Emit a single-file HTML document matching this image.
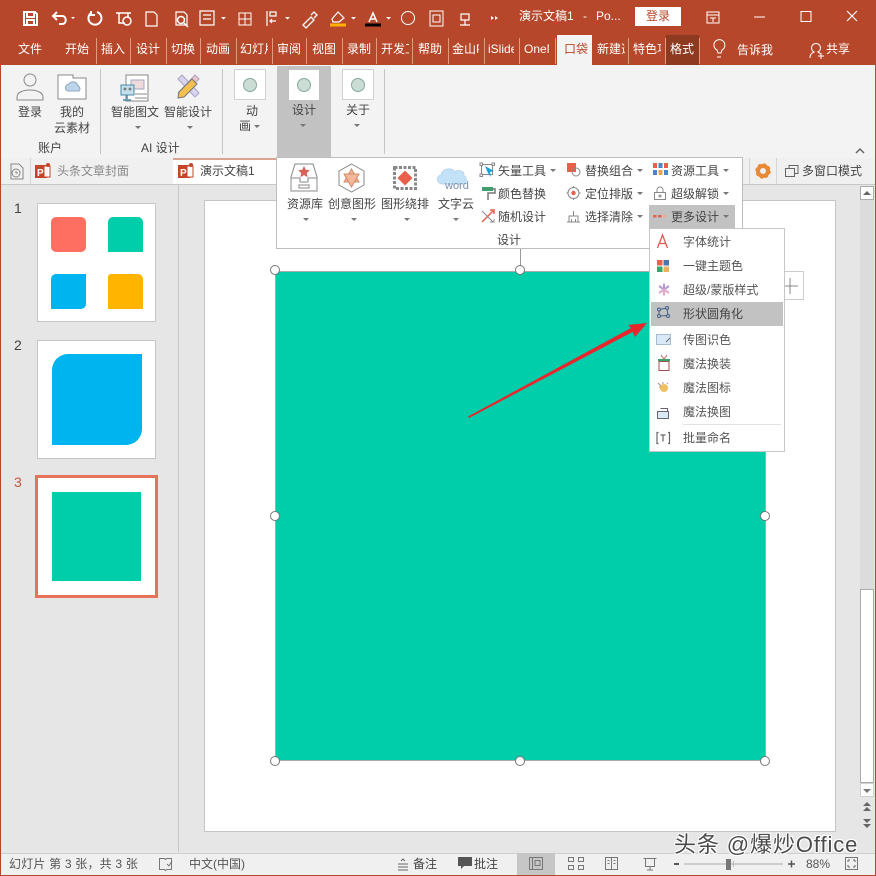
<!DOCTYPE html>
<html lang="zh"><head><meta charset="utf-8"><title>演示文稿1 - PowerPoint</title>
<style>
html,body{margin:0;padding:0}
body{width:876px;height:876px;position:relative;overflow:hidden;background:#e6e6e6;font-family:"Liberation Sans","Noto Sans CJK SC",sans-serif;font-size:12px;color:#444}
.b{position:absolute}
.t{position:absolute;white-space:nowrap;line-height:16px}
.w{color:#fff}
.c{overflow:hidden}
.d{position:absolute;width:0;height:0;border-left:3px solid transparent;border-right:3px solid transparent;border-top:3px solid #777}
.s{position:absolute;width:1px;height:26px;top:38px;background:#e59a7f}
.v{position:absolute;width:1px;background:#c6c6c6}
.h{position:absolute;width:8px;height:8px;border:1px solid #777;border-radius:50%;background:#fff}
.ic{position:absolute;width:30px;height:30px;background:#fff;border:1px solid #d2d2d2;box-sizing:border-box}
.ic i{position:absolute;left:7px;top:7px;width:14px;height:14px;border-radius:50%;background:#c9ddd5;border:1px solid #88a89c;box-sizing:border-box}
svg{position:absolute;overflow:visible}
</style></head><body>

<!-- title bar + tab row -->
<div class="b" style="left:0;top:0;width:876px;height:65px;background:#b7472a"></div>
<div class="b" style="left:0;top:0;width:1px;height:876px;background:#b7472a"></div>
<div class="b" style="right:0;top:0;width:1px;height:876px;background:#b7472a"></div>
<div class="b" style="left:0;bottom:0;width:876px;height:1px;background:#b7472a"></div>

<svg style="left:0;top:0" width="876" height="65" fill="none" stroke="#fff" stroke-width="1.500">
<path d="M24 12h11l2 2v11H24z M27 12v5h7v-5 M27 25v-5h7v5" stroke-width="2"/>
<path d="M54 16h8c5 0 5 8 0 8h-3 M57 12l-4 4 4 4" stroke-width="2"/><path d="M71 17l2 2 2-2z" fill="#fff" stroke="none"/>
<path d="M97 12a6.500 6.500 0 1 1-6 1 M91 11v4h4" stroke-width="2"/>
<path d="M116 13h15 M119 13v10h6 M128 13v4"/><circle cx="127" cy="21" r="4"/>
<path d="M146 12h8l3 3v11h-11z" stroke-width="1.200"/>
<path d="M176 12h8l3 3v10h-11z" stroke-width="1.200"/><circle cx="181" cy="20" r="3.500"/><path d="M184 23l4 4"/>
<path d="M200 11h14v14h-14z M203 15h8 M203 19h8" stroke-width="1.200"/><path d="M221 17l2.500 2.500 2.500-2.500z" fill="#fff" stroke="none"/>
<path d="M239 13h12v12h-12z M245 13v12 M239 19h12" stroke-width="1"/>
<path d="M267 11v15 M270 12h6v4h-6z M270 21h6 M272 19l-2 2 2 2" stroke-width="1.200"/><path d="M285 17l2.500 2.500 2.500-2.500z" fill="#fff" stroke="none"/>
<path d="M303 25l8-8 3 3-8 8z M311 15l3-3 3 3-3 3" stroke-width="1.300"/>
<path d="M332 19l6-7 6 6-5 4h-6z" stroke-width="1.200"/><path d="M330 25h16" stroke="#ffb000" stroke-width="3"/><path d="M351 17l2.500 2.500 2.500-2.500z" fill="#fff" stroke="none"/>
<path d="M369 22l4-9 4 9 M370.500 19h5" stroke-width="1.500"/><path d="M365 25h16" stroke="#000" stroke-width="3"/><path d="M386 17l2.500 2.500 2.500-2.500z" fill="#fff" stroke="none"/>
<circle cx="408" cy="18" r="6.500" stroke-width="1"/>
<path d="M430 11h13v15h-13z M433 15h7v7h-7z" stroke-width="1"/>
<path d="M461 14h8v6h-8z M465 20v5 M460 25h10" stroke-width="1.200"/>
<path d="M491 16v4l3-2z M495 16v4l3-2z" fill="#fff" stroke="none"/>
<path d="M707 12h12v11h-12z M707 15h12 M713 18v4 M710 18h6" stroke-width="1"/>
<path d="M754 17h11" stroke-width="1"/>
<path d="M801 11.500h10v10h-10z" stroke-width="1"/>
<path d="M847 11l10 10 M857 11l-10 10" stroke-width="1.200"/>
<path d="M714 44a5.500 5.500 0 1 1 8 6l-1 3h-3l-1-3a5.500 5.500 0 0 1-3-6z M717 57h4" stroke-width="1"/>
<path d="M810 58c0-4 2-5 4-6a4.500 4.500 0 1 1 4 0c1 .5 2 1 2.500 2 M818 56h6 M821 53v6" stroke-width="1"/>
</svg>

<div class="t w" style="left:519px;top:8px">演示文稿1</div>
<div class="t w" style="left:583px;top:8px">-</div>
<div class="t w" style="left:596px;top:8px">Po...</div>
<div class="b" style="left:635px;top:7px;width:46px;height:19px;background:#fff"></div>
<div class="t" style="left:646px;top:8px;color:#b7472a">登录</div>

<div class="t w" style="left:18px;top:41px">文件</div>
<div class="t w" style="left:65px;top:41px">开始</div>
<div class="t w" style="left:101px;top:41px">插入</div>
<div class="t w" style="left:136px;top:41px">设计</div>
<div class="t w" style="left:171px;top:41px">切换</div>
<div class="t w" style="left:206px;top:41px">动画</div>
<div class="t w c" style="left:240px;top:41px;width:28px">幻灯片放映</div>
<div class="t w" style="left:277px;top:41px">审阅</div>
<div class="t w" style="left:312px;top:41px">视图</div>
<div class="t w" style="left:347px;top:41px">录制</div>
<div class="t w c" style="left:381px;top:41px;width:28px">开发工具</div>
<div class="t w" style="left:418px;top:41px">帮助</div>
<div class="t w c" style="left:452px;top:41px;width:27px">金山PDF</div>
<div class="t w c" style="left:488px;top:41px;width:26px">iSlide</div>
<div class="t w c" style="left:524px;top:41px;width:25px">OneNote</div>
<div class="b" style="left:557px;top:35px;width:35px;height:30px;background:#f3f3f3"></div>
<div class="t" style="left:564px;top:41px;color:#b7472a">口袋</div>
<div class="t w c" style="left:597px;top:41px;width:28px">新建选项卡</div>
<div class="t w c" style="left:633px;top:41px;width:28px">特色功能</div>
<div class="b" style="left:666px;top:35px;width:33px;height:30px;background:#8e3a21"></div>
<div class="t w" style="left:670px;top:41px">格式</div>
<div class="t w" style="left:737px;top:42px">告诉我</div>
<div class="t w" style="left:826px;top:41px">共享</div>
<div class="s" style="left:96px"></div><div class="s" style="left:130px"></div><div class="s" style="left:166px"></div><div class="s" style="left:200px"></div><div class="s" style="left:236px"></div><div class="s" style="left:272px"></div><div class="s" style="left:306px"></div><div class="s" style="left:342px"></div><div class="s" style="left:376px"></div><div class="s" style="left:412px"></div><div class="s" style="left:448px"></div><div class="s" style="left:484px"></div><div class="s" style="left:519px"></div><div class="s" style="left:555px"></div><div class="s" style="left:628px"></div><div class="s" style="left:665px"></div><div class="s" style="left:699px"></div>

<!-- ribbon -->
<div class="b" style="left:1px;top:65px;width:874px;height:93px;background:#f3f3f3"></div>
<div class="v" style="left:100px;top:69px;height:85px"></div>
<div class="v" style="left:222px;top:69px;height:85px"></div>
<div class="v" style="left:384px;top:69px;height:85px"></div>
<svg style="left:0;top:60px" width="240" height="100" fill="none" stroke="#888" stroke-width="1">
<circle cx="30" cy="20" r="6"/><path d="M17 40v-3c0-5 7-7 13-7s13 2 13 7v3z"/>
<path d="M58 19v-4h15v3h13v21H58z" fill="#fff"/><path d="M66 30a4 4 0 0 1 3-6 5 5 0 0 1 9 2 3 3 0 0 1 1 5H68z" fill="#bcd4ea" stroke="#8fa8c0"/>
<path d="M126 15h22v26h-22z" fill="#fff"/><path d="M131 20h13v9h-13z" fill="#f0dbdc" stroke="#a0a7c0"/><path d="M135 34h12M135 38h12"/>
<path d="M121 25h13v10h-13z" fill="#c4deec" stroke="#4d8aa5"/><path d="M127 35v4M123 40h8" stroke="#4d8aa5" stroke-width="1.500"/><circle cx="125" cy="29" r="1" fill="#345"/><circle cx="130" cy="29" r="1" fill="#345"/>
<path d="M178 19l4-4 17 18-4 4z" fill="#d8d4ee" stroke="#a9a5c8"/><path d="M195 15l4 4-17 18-4-4z" fill="#f0c6c8" stroke="#a9a5c8"/><path d="M178 38l1-6 13-13 5 5-13 13z" fill="#f5c04e" stroke="#777"/>
</svg>
<div class="ic" style="left:234px;top:69px;height:31px;width:32px"><i style="left:8px;top:8px"></i></div>
<div class="b" style="left:277px;top:66px;width:54px;height:92px;background:#c2c2c2"></div>
<div class="ic" style="left:289px;top:70px;border:0"><i style="left:8px;top:8px"></i></div>
<div class="ic" style="left:342px;top:69px;height:31px;width:32px"><i style="left:8px;top:8px"></i></div>
<div class="t" style="left:18px;top:104px">登录</div>
<div class="t" style="left:60px;top:104px">我的</div>
<div class="t" style="left:54px;top:120px">云素材</div>
<div class="t" style="left:38px;top:140px">账户</div>
<div class="t" style="left:111px;top:104px">智能图文</div>
<div class="t" style="left:164px;top:104px">智能设计</div>
<div class="d" style="left:135px;top:126px"></div><div class="d" style="left:187px;top:126px"></div>
<div class="t" style="left:141px;top:140px">AI 设计</div>
<div class="t" style="left:246px;top:103px">动</div>
<div class="t" style="left:239px;top:118px">画</div><div class="d" style="left:254px;top:125px"></div>
<div class="t" style="left:292px;top:102px">设计</div><div class="d" style="left:300px;top:124px"></div>
<div class="t" style="left:346px;top:102px">关于</div><div class="d" style="left:354px;top:124px"></div>
<svg style="left:852px;top:145px" width="20" height="10" fill="none" stroke="#666" stroke-width="1.500"><path d="M4 8l4-4 4 4"/></svg>

<!-- doc tab bar -->
<div class="b" style="left:1px;top:158px;width:874px;height:26px;background:#f0f0f0;border-bottom:1px solid #c8c8c8"></div>
<div class="v" style="left:30px;top:158px;height:26px;background:#d5d5d5"></div>
<div class="b" style="left:173px;top:158px;width:104px;height:26px;background:#fff;border-top:2px solid #d9a590;box-sizing:border-box"></div>
<svg style="left:8px;top:160px" width="18" height="22" fill="none" stroke="#888"><path d="M3 4h8l4 4v11H3z"/><circle cx="8" cy="13" r="4" fill="#f0f0f0"/><path d="M8 11v2h2"/></svg>
<svg style="left:34px;top:162px" width="18" height="18"><rect x="1" y="3" width="12" height="13" fill="#c6442a"/><rect x="10" y="4" width="6" height="11" fill="#fff" stroke="#c6442a"/><circle cx="14" cy="3" r="2" fill="#c6442a"/><text x="3" y="14" font-size="10" font-weight="700" fill="#fff" font-family="Liberation Sans">P</text></svg>
<svg style="left:177px;top:162px" width="18" height="18"><rect x="1" y="3" width="12" height="13" fill="#c6442a"/><rect x="10" y="4" width="6" height="11" fill="#fff" stroke="#c6442a"/><circle cx="14" cy="3" r="2" fill="#c6442a"/><text x="3" y="14" font-size="10" font-weight="700" fill="#fff" font-family="Liberation Sans">P</text></svg>
<div class="t" style="left:57px;top:163px;color:#888">头条文章封面</div>
<div class="t" style="left:200px;top:163px">演示文稿1</div>
<div class="v" style="left:749px;top:158px;height:26px;background:#d5d5d5"></div>
<div class="v" style="left:776px;top:158px;height:26px;background:#d5d5d5"></div>
<svg style="left:755px;top:163px" width="16" height="16"><circle cx="8" cy="8" r="5" fill="none" stroke="#e88a35" stroke-width="4"/><circle cx="8" cy="8" r="7" fill="none" stroke="#e88a35" stroke-width="1.500" stroke-dasharray="3 2.500"/></svg>
<svg style="left:784px;top:163px" width="16" height="16" fill="#f0f0f0" stroke="#666"><path d="M5 2.500h9v8h-9z"/><path d="M1.500 5.500h9v8h-9z"/></svg>
<div class="t" style="left:802px;top:163px">多窗口模式</div>

<!-- left pane -->
<div class="v" style="left:178px;top:185px;height:667px;background:#c8c8c8"></div>
<div class="t" style="left:14px;top:199px;font-size:14px;line-height:18px">1</div>
<div class="t" style="left:14px;top:336px;font-size:14px;line-height:18px">2</div>
<div class="t" style="left:14px;top:473px;font-size:14px;line-height:18px;color:#c4573d">3</div>
<div class="b" style="left:37px;top:203px;width:119px;height:119px;background:#fff;border:1px solid #c6c6c6;box-sizing:border-box"></div>
<div class="b" style="left:51px;top:217px;width:35px;height:35px;background:#ff6f61;border-radius:5px"></div>
<div class="b" style="left:108px;top:217px;width:35px;height:35px;background:#00cdaa;border-radius:5px 5px 0 0"></div>
<div class="b" style="left:51px;top:274px;width:35px;height:35px;background:#00b4ef;border-radius:5px 0 5px 0"></div>
<div class="b" style="left:108px;top:274px;width:35px;height:35px;background:#ffb400;border-radius:3px 5px 0 0"></div>
<div class="b" style="left:37px;top:340px;width:119px;height:119px;background:#fff;border:1px solid #c6c6c6;box-sizing:border-box"></div>
<div class="b" style="left:52px;top:354px;width:90px;height:91px;background:#00b4ef;border-radius:16px 0 16px 0"></div>
<div class="b" style="left:35px;top:475px;width:123px;height:123px;background:#fff;border:3px solid #e9705a;box-sizing:border-box"></div>
<div class="b" style="left:52px;top:492px;width:89px;height:89px;background:#00cdaa"></div>

<!-- slide -->
<div class="b" style="left:204px;top:200px;width:632px;height:632px;background:#fff;border:1px solid #c4c4c4;box-sizing:border-box"></div>
<div class="b" style="left:276px;top:272px;width:489px;height:488px;background:#00cdaa;outline:1px solid #aaa"></div>
<div class="v" style="left:520px;top:248px;height:20px;background:#999"></div>
<div class="h" style="left:270px;top:265px"></div><div class="h" style="left:515px;top:265px"></div><div class="h" style="left:270px;top:511px"></div><div class="h" style="left:760px;top:511px"></div><div class="h" style="left:270px;top:756px"></div><div class="h" style="left:515px;top:756px"></div><div class="h" style="left:760px;top:756px"></div>
<div class="b" style="left:775px;top:271px;width:29px;height:29px;background:#fff;border:1px solid #ccc;box-sizing:border-box"></div>
<svg style="left:775px;top:271px" width="30" height="30" stroke="#888"><path d="M15 7v16M7 15h16"/></svg>
<svg style="left:0;top:0" width="876" height="876"><path d="M468 416.500L631 328l-3-3 19-2-12 14-2.500-5L469 418z" fill="#e8262c"/></svg>

<!-- scrollbar -->
<div class="b" style="left:860px;top:186px;width:14px;height:610px;background:#dcdcdc"></div>
<div class="b" style="left:860px;top:186px;width:14px;height:14px;background:#fff;border:1px solid #ababab;box-sizing:border-box"></div>
<div class="d" style="left:863px;top:191px;border:0;border-left:4px solid transparent;border-right:4px solid transparent;border-bottom:4px solid #666"></div>
<div class="b" style="left:860px;top:589px;width:14px;height:194px;background:#fff;border:1px solid #ababab;box-sizing:border-box"></div>
<div class="b" style="left:860px;top:783px;width:14px;height:14px;background:#fff;border:1px solid #d0d0d0;box-sizing:border-box"></div>
<div class="d" style="left:863px;top:789px;border-left-width:4px;border-right-width:4px;border-top-width:4px"></div>
<svg style="left:860px;top:800px" width="14" height="30" fill="#666"><path d="M3 6l4-4 4 4zM3 11l4-4 4 4z"/><path d="M3 19l4 4 4-4zM3 24l4 4 4-4z"/></svg>

<!-- design panel -->
<div class="b" style="left:276px;top:157px;width:467px;height:92px;background:#fff;border:1px solid #bdbdbd;box-sizing:border-box"></div>
<svg style="left:276px;top:157px" width="470" height="60" fill="none" stroke="#888">
<path d="M15 20l4-13h18l4 13v14H15z" fill="#fff"/><path d="M15 21h9v4h8v-4h9"/><path d="M23 28h10v3H23z"/><path d="M28 9l1.800 3.800 4 .5-3 2.800.8 4-3.600-2-3.600 2 .8-4-3-2.800 4-.5z" fill="#d9625a" stroke="none"/>
<path d="M75.500 7l12.500 7v14l-12.500 7-12.500-7V14z"/><path d="M75.500 12l7.500 13H68z" fill="#f5b79a" stroke="#cf8b68"/><path d="M75.500 30l-7.500-13h15z" fill="#f5b79a" stroke="#cf8b68"/>
<path d="M118.500 10.500h21v21h-21z" stroke="#888" stroke-width="3" stroke-dasharray="3 1.500"/><path d="M129 13.500l7.500 7.500-7.500 7.500-7.500-7.500z" fill="#e8604a" stroke="none"/>
<path d="M166 27c-6-1-6-8-1-9 1-7 11-8 14-3 3-3 10-1 9 4 3 1 3 7 0 8z" fill="#c3e2f7" stroke="#b4d6ee"/>
</svg>
<div class="t" style="left:445px;top:180px;font-size:11px;color:#7c8db0;line-height:12px">word</div>
<div class="t" style="left:287px;top:196px">资源库</div><div class="d" style="left:303px;top:218px"></div>
<div class="t" style="left:328px;top:196px">创意图形</div><div class="d" style="left:351px;top:218px"></div>
<div class="t" style="left:381px;top:196px">图形绕排</div><div class="d" style="left:404px;top:218px"></div>
<div class="t" style="left:438px;top:196px">文字云</div><div class="d" style="left:453px;top:218px"></div>
<div class="t" style="left:498px;top:163px">矢量工具</div><div class="d" style="left:550px;top:169px"></div>
<div class="t" style="left:498px;top:186px">颜色替换</div>
<div class="t" style="left:498px;top:209px">随机设计</div>
<div class="t" style="left:585px;top:163px">替换组合</div><div class="d" style="left:637px;top:169px"></div>
<div class="t" style="left:585px;top:186px">定位排版</div><div class="d" style="left:637px;top:192px"></div>
<div class="t" style="left:585px;top:209px">选择清除</div><div class="d" style="left:637px;top:215px"></div>
<div class="t" style="left:671px;top:163px">资源工具</div><div class="d" style="left:723px;top:169px"></div>
<div class="t" style="left:671px;top:186px">超级解锁</div><div class="d" style="left:723px;top:192px"></div>
<div class="b" style="left:649px;top:205px;width:86px;height:23px;background:#c2c2c2"></div>
<div class="t" style="left:671px;top:209px">更多设计</div><div class="d" style="left:723px;top:215px"></div>
<div class="t" style="left:497px;top:232px">设计</div>
<svg style="left:476px;top:160px" width="260" height="68" fill="none" stroke="#888">
<path d="M5.500 4.500h11v10h-11z"/><path d="M9 6l9 5-4 1 1 5-3-4z" fill="#1a9fd9" stroke="none"/><rect x="4" y="3" width="2.500" height="2.500" fill="#fff"/><rect x="16" y="3" width="2.500" height="2.500" fill="#fff"/><rect x="4" y="14" width="2.500" height="2.500" fill="#fff"/>
<path d="M6 27h11v4H6z" fill="#3f9e6e" stroke="none"/><path d="M17 29h2v4h-7v7" stroke="#777" stroke-width="1.500"/>
<path d="M6 62L17 51M14 50h4v4" stroke="#e8604a" stroke-width="1.500"/><path d="M6 51l11 11M14 62h4v-3" stroke="#888"/>
<rect x="91" y="3" width="9" height="9" fill="#e8604a" stroke="none"/><circle cx="100" cy="12" r="4"/>
<circle cx="97.500" cy="33" r="5.500"/><circle cx="97.500" cy="33" r="2.200" fill="#e8604a" stroke="none"/><path d="M97.500 26v2M97.500 38v2M90.500 33h2M102.500 33h2"/>
<path d="M91 62h13M93 62v-6h9v6M97.500 56v-5M95.500 62v-3M99.500 62v-3"/>
<g stroke="none"><rect x="177" y="3" width="4" height="5" fill="#e8604a"/><rect x="182.500" y="3" width="4" height="5" fill="#4a86c5"/><rect x="188" y="3" width="4" height="5" fill="#e8604a"/><rect x="177" y="10" width="4" height="5" fill="#4a86c5"/><rect x="182.500" y="10" width="4" height="5" fill="#e8a050"/><rect x="188" y="10" width="4" height="5" fill="#4a86c5"/></g>
<path d="M178.500 32.500h11v7h-11zM181 32v-2a3 3 0 0 1 6 0v2"/><circle cx="184" cy="36" r="1"/>
<rect x="177" y="55" width="3.500" height="2.500" fill="#e8604a" stroke="none"/><rect x="182" y="55" width="3.500" height="2.500" fill="#e8604a" stroke="none"/><rect x="187" y="55" width="3.500" height="2.500" fill="#e8a9a0" stroke="none"/>
</svg>

<!-- dropdown -->
<div class="b" style="left:649px;top:228px;width:136px;height:224px;background:#fff;border:1px solid #c6c6c6;box-sizing:border-box"></div>
<div class="b" style="left:651px;top:302px;width:132px;height:24px;background:#c2c2c2"></div>
<div class="b" style="left:683px;top:424px;width:98px;height:1px;background:#e2e2e2"></div>
<div class="t" style="left:683px;top:234px;color:#555">字体统计</div>
<div class="t" style="left:683px;top:258px;color:#555">一键主题色</div>
<div class="t" style="left:683px;top:282px;color:#555">超级/蒙版样式</div>
<div class="t" style="left:683px;top:306px;color:#444">形状圆角化</div>
<div class="t" style="left:683px;top:332px;color:#555">传图识色</div>
<div class="t" style="left:683px;top:356px;color:#555">魔法换装</div>
<div class="t" style="left:683px;top:380px;color:#555">魔法图标</div>
<div class="t" style="left:683px;top:404px;color:#555">魔法换图</div>
<div class="t" style="left:683px;top:430px;color:#555">批量命名</div>
<svg style="left:650px;top:230px" width="30" height="220" fill="none" stroke="#888">
<path d="M7.500 18l5-13 5 13M9.500 13.500h6" stroke="#e0554e" stroke-width="1.300"/>
<g stroke="none"><rect x="7" y="30" width="5.500" height="5.500" fill="#e8604a"/><rect x="13.500" y="30" width="5.500" height="5.500" fill="#4a76a8"/><rect x="7" y="36.500" width="5.500" height="5.500" fill="#38a66c"/><rect x="13.500" y="36.500" width="5.500" height="5.500" fill="#e8b060"/></g>
<path d="M14 59.500v-6M14 59.500l5-3.500M14 59.500l-5-3.500" stroke="#b79ad8" stroke-width="2"/><path d="M14 59.500l5 3.500M14 59.500v6M14 59.500l-5 3.500" stroke="#e6a8c8" stroke-width="2"/>
<path d="M9 79.500l8-1.500 1 7.500-9 .5z" stroke="#44608a"/><circle cx="9" cy="79.500" r="1.500" fill="#c2c2c2" stroke="#44608a"/><circle cx="17" cy="78" r="1.500" fill="#c2c2c2" stroke="#44608a"/><circle cx="9" cy="86" r="1.500" fill="#c2c2c2" stroke="#44608a"/><circle cx="18" cy="86" r="1.500" fill="#c2c2c2" stroke="#44608a"/>
<path d="M6.500 104.500h14v10h-14z" fill="#dbe8f5" stroke="#a8bcd0"/><path d="M16 112l4-4" stroke="#667"/>
<path d="M9 131.500h10v9H9z" stroke="#a05050"/><path d="M8 130h12" stroke="#38a66c" stroke-width="2"/><path d="M11 125l3 4 3-4" stroke="#c06060"/>
<path d="M8 153l8 8" stroke="#a88"/><circle cx="14" cy="158" r="4" fill="#f0c060" stroke="none"/><path d="M9 157h2M13 152v2M18 153l-1 1" stroke="#c88"/>
<path d="M7.500 181.500h11v7h-11z" fill="#dbe8f5" stroke="#667"/><path d="M10.500 178.500h7v3" stroke="#667"/>
<path d="M8.500 202.500H7v11h1.500M18 202.500h1.500v11H18M10.500 205h5M13 205v6.500" stroke="#666" stroke-width="1.200"/>
</svg>

<!-- status bar -->
<div class="b" style="left:1px;top:853px;width:874px;height:22px;background:#f0f0f0;border-top:1px solid #cfcfcf;box-sizing:border-box"></div>
<div class="t" style="left:9px;top:856px;color:#555;letter-spacing:.2px">幻灯片 第 3 张，共 3 张</div>
<svg style="left:158px;top:856px" width="16" height="16" fill="none" stroke="#777"><path d="M1.500 2.500h5l1 1 1-1h5v11h-5l-1 1-1-1h-5z"/><path d="M9 8l2 2 3-5"/></svg>
<div class="t" style="left:189px;top:856px;color:#555">中文(中国)</div>
<svg style="left:396px;top:857px" width="14" height="14" fill="none" stroke="#666"><path d="M2 7h10M2 10h10M2 13h10"/><path d="M5 4l2-2 2 2"/></svg>
<div class="t" style="left:413px;top:856px">备注</div>
<svg style="left:457px;top:856px" width="16" height="14"><path d="M1 1h14v9H7l-3 3v-3H1z" fill="#555"/></svg>
<div class="t" style="left:474px;top:856px">批注</div>
<div class="b" style="left:517px;top:853px;width:38px;height:22px;background:#c6c6c6"></div>
<svg style="left:520px;top:853px" width="350" height="22" fill="none" stroke="#777">
<path d="M9.500 4.500h13v12h-13zM12.500 4.500v12M15 7.500h5v5h-5z"/>
<path d="M48.500 4.500h5v4h-5zM58.500 4.500h5v4h-5zM48.500 12.500h5v4h-5zM58.500 12.500h5v4h-5z"/>
<path d="M85.500 4.500h12v12h-12zM91.500 4.500v12M87.500 7.500h2M87.500 10.500h2M93.500 7.500h2M93.500 10.500h2"/>
<path d="M123.500 5.500h13M125.500 5.500v8h9v-8M130 13.500v3M127 17h6"/>
<path d="M154 11h5" stroke="#555" stroke-width="2"/><path d="M164 11h99" stroke="#aaa"/><rect x="206" y="6" width="5" height="11" fill="#777" stroke="none"/><path d="M213.500 8v6" stroke="#bbb"/>
<path d="M268 11h7M271.500 7.500v7" stroke="#555" stroke-width="1.500"/>
<path d="M325.500 4.500h12v12h-12z"/><path d="M328 7h2M328 7v2M335 7h-2M335 7v2M328 14h2M328 14v-2M335 14h-2M335 14v-2" stroke="#666"/>
</svg>
<div class="t" style="left:806px;top:856px;color:#555">88%</div>

<!-- watermark -->
<div class="t" style="left:674px;top:830px;font-size:22px;line-height:30px;letter-spacing:.9px;color:#4a4a4a;text-shadow:1px 1px 0 #fff,-1px -1px 0 #fff,1px -1px 0 #fff,-1px 1px 0 #fff">头条 @爆炒Office</div>
</body></html>
